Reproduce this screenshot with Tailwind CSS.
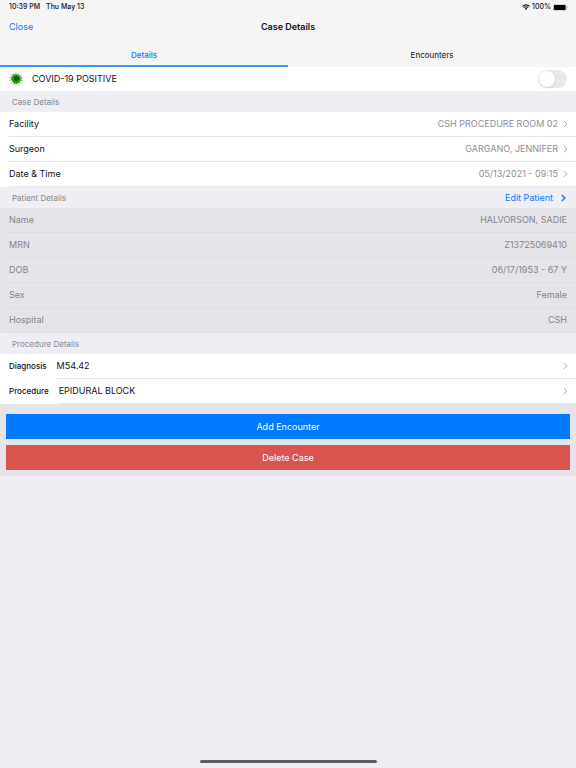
<!doctype html>
<html lang="en">
  <head>
    <meta charset="UTF-8" />
    <meta name="viewport" content="width=device-width, initial-scale=1.0" />
    <title>Case Details</title>
    <script src="https://cdn.jsdelivr.net/npm/@tailwindcss/browser@4"></script>
  </head>
  <body class="min-h-screen flex flex-col bg-[#efeef4] font-['Inter','Liberation_Sans',sans-serif] text-[9px] leading-3 text-[#111]">
    <svg class="hidden">
      <symbol id="chevron" viewBox="0 0 5 8">
        <path d="M.8.9 4 4 .8 7.1" fill="none" stroke="currentColor" />
      </symbol>
    </svg>

    <header class="bg-[#f5f5f5]">
      <div class="flex items-center justify-between h-[14px] pl-[9px] pr-2 text-[7px] font-medium">
        <div class="flex gap-[6px]">
          <span>10:39 PM</span>
          <span>Thu May 13</span>
        </div>
        <div class="flex items-center gap-[2px]">
          <svg class="w-2 h-[6px]" viewBox="0 0 16 12" fill="none" stroke="#111" stroke-width="2.2">
            <path d="M1 4.6a10 10 0 0 1 14 0M3.6 7.4a6.2 6.2 0 0 1 8.8 0" />
            <path d="M8 12 5.4 9.3a3.7 3.7 0 0 1 5.2 0z" fill="#111" stroke="none" />
          </svg>
          <span>100%</span>
          <svg class="w-[15px] h-[7px]" viewBox="0 0 30 14">
            <rect x=".5" y=".5" width="26" height="13" rx="3.5" fill="none" stroke="#999" />
            <rect x="1.8" y="1.8" width="23.4" height="10.4" rx="2" />
            <path d="M28 5v4c1.8-.6 1.8-3.4 0-4z" fill="#999" />
          </svg>
        </div>
      </div>
      <div class="grid grid-cols-[1fr_auto_1fr] items-center h-[25px] px-[9px]">
        <button type="button" class="justify-self-start text-[#0a7cff]">Close</button>
        <h1 class="font-semibold">Case Details</h1>
      </div>
      <nav class="grid grid-cols-2 h-7 text-[8px]">
        <button type="button" class="pt-[6px] border-b-2 border-[#3d97fb] font-medium text-[#0a7cff]">Details</button>
        <button type="button" class="pt-[6px] border-b-2 border-transparent">Encounters</button>
      </nav>
    </header>

    <main class="flex-1">
      <div class="flex items-center h-6 px-[9px] bg-white">
        <svg class="w-[14px] h-[14px]" viewBox="0 0 28 28">
          <path
            d="M14 5V1m4 5 2-4m1 6 4-3m-2 7 4-1m-4 5 4 1m-6 3 4 3m-7-1 2 4m-6-3v4m-4-5-2 4m-1-6-4 3m2-7-4 1m4-5-4-1m6-3L3 5m7 1L8 2"
            fill="none" stroke="#8ccb72" stroke-width="1.8" stroke-linecap="round"
          />
          <path
            d="m14 3 2 2 3-1 1 3 3 0 0 3 3 2-2 3 1 3-3 1-1 3-3 0-2 3-3-2-3 1-1-3-3-1 0-3-3-2 2-3-1-3 3-1 0-3 3 0z"
            fill="#58ab39"
          />
          <circle cx="14" cy="14" r="7.8" fill="#2c8b16" />
          <path d="m9 12 5-4 6 2 1 5-5 4-5-1z" fill="#0d5703" />
          <path d="m7 10 3 2m-3 5 4-1m1 5 2-3m5 2-2-3" stroke="#63b53d" stroke-width="1.2" />
        </svg>
        <label for="covid" class="flex-1 pl-[9px]">COVID-19 POSITIVE</label>
        <input
          type="checkbox"
          id="covid"
          role="switch"
          class="appearance-none flex items-center w-[29px] h-[18px] p-px rounded-full bg-[#e8e8ea] checked:bg-[#34c759] before:w-4 before:h-4 before:rounded-full before:bg-white before:shadow checked:before:ml-auto"
        />
      </div>

      <h2 class="flex items-center h-[21px] px-3 text-[8px] text-[#85858a]">Case Details</h2>
      <section class="bg-white">
        <button type="button" class="flex w-full pl-[9px] text-left">
          <span class="flex flex-1 items-center justify-between h-[25px] pr-2 border-b border-[#e6e6e8]">
            <span>Facility</span>
            <span class="flex items-center gap-[5px] text-[#8e8e93]">CSH PROCEDURE ROOM 02
              <svg class="w-[5px] h-2 text-[#b0b0b4]"><use href="#chevron" /></svg>
            </span>
          </span>
        </button>
        <button type="button" class="flex w-full pl-[9px] text-left">
          <span class="flex flex-1 items-center justify-between h-[25px] pr-2 border-b border-[#e6e6e8]">
            <span>Surgeon</span>
            <span class="flex items-center gap-[5px] text-[#8e8e93]">GARGANO, JENNIFER
              <svg class="w-[5px] h-2 text-[#b0b0b4]"><use href="#chevron" /></svg>
            </span>
          </span>
        </button>
        <button type="button" class="flex w-full pl-[9px] text-left">
          <span class="flex flex-1 items-center justify-between h-[25px] pr-2 border-b border-[#e6e6e8]">
            <span>Date &amp; Time</span>
            <span class="flex items-center gap-[5px] text-[#8e8e93]">05/13/2021 - 09:15
              <svg class="w-[5px] h-2 text-[#b0b0b4]"><use href="#chevron" /></svg>
            </span>
          </span>
        </button>
      </section>

      <div class="flex items-center justify-between h-[21px] pl-3 pr-[10px]">
        <h2 class="text-[8px] text-[#85858a]">Patient Details</h2>
        <button type="button" class="flex items-center gap-2 text-[#0a7cff]">Edit Patient
          <svg class="w-[5px] h-2" stroke-width="1.4"><use href="#chevron" /></svg>
        </button>
      </div>
      <dl class="pl-[9px] bg-[#e5e4e9] text-[#85858a]">
        <div class="flex items-center justify-between h-[25px] pr-[9px] border-b border-[#dddce1]">
          <dt>Name</dt>
          <dd>HALVORSON, SADIE</dd>
        </div>
        <div class="flex items-center justify-between h-[25px] pr-[9px] border-b border-[#dddce1]">
          <dt>MRN</dt>
          <dd>Z13725069410</dd>
        </div>
        <div class="flex items-center justify-between h-[25px] pr-[9px] border-b border-[#dddce1]">
          <dt>DOB</dt>
          <dd>06/17/1953 - 67 Y</dd>
        </div>
        <div class="flex items-center justify-between h-[25px] pr-[9px] border-b border-[#dddce1]">
          <dt>Sex</dt>
          <dd>Female</dd>
        </div>
        <div class="flex items-center justify-between h-[25px] pr-[9px] border-b border-[#dddce1]">
          <dt>Hospital</dt>
          <dd>CSH</dd>
        </div>
      </dl>

      <h2 class="flex items-center h-[21px] px-3 text-[8px] text-[#85858a]">Procedure Details</h2>
      <section class="bg-white">
        <button type="button" class="flex items-baseline gap-[10px] w-full pl-[9px] text-left">
          <span class="text-[8px] font-medium">Diagnosis</span>
          <span class="flex flex-1 items-center justify-between h-[25px] pr-2 border-b border-[#e6e6e8]">M54.42
            <svg class="w-[5px] h-2 text-[#b0b0b4]"><use href="#chevron" /></svg>
          </span>
        </button>
        <button type="button" class="flex items-baseline gap-[10px] w-full pl-[9px] text-left">
          <span class="text-[8px] font-medium">Procedure</span>
          <span class="flex flex-1 items-center justify-between h-[25px] pr-2 border-b border-[#e6e6e8]">EPIDURAL BLOCK
            <svg class="w-[5px] h-2 text-[#b0b0b4]"><use href="#chevron" /></svg>
          </span>
        </button>
      </section>

      <div class="flex flex-col gap-[6px] px-[6px] pt-[10px] pb-[6px] bg-[#e5e4e9] text-white">
        <button type="button" class="h-[25px] bg-[#007aff]">Add Encounter</button>
        <button type="button" class="h-[25px] bg-[#d9534f]">Delete Case</button>
      </div>
    </main>

    <footer class="flex justify-center pb-[5px]">
      <div class="w-[177px] h-[3px] rounded-full bg-[#5c5c5e]"></div>
    </footer>
  </body>
</html>
